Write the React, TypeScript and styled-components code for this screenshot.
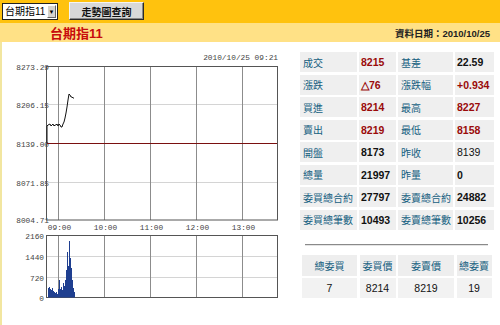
import React from "react";
import styled, { createGlobalStyle } from "styled-components";

const GlobalStyle = createGlobalStyle`
  body {
    margin: 0;
    background: #ffffff;
    font-family: "Liberation Sans", "Noto Sans CJK TC", sans-serif;
  }
`;

const quotes = [
  ["成交", "8215", "red", "基差", "22.59", "black"],
  ["漲跌", "△76", "red", "漲跌幅", "+0.934", "red"],
  ["買進", "8214", "red", "最高", "8227", "red"],
  ["賣出", "8219", "red", "最低", "8158", "red"],
  ["開盤", "8173", "black", "昨收", "8139", "plain"],
  ["總量", "21997", "black", "昨量", "0", "black"],
  ["委買總合約", "27797", "black", "委賣總合約", "24882", "black"],
  ["委買總筆數", "10493", "black", "委賣總筆數", "10256", "black"],
];

const orderHead = ["總委買", "委買價", "委賣價", "總委賣"];
const orderData = ["7", "8214", "8219", "19"];

const pricePoints = [
  [47, 143], [47, 126], [48, 125], [50, 124], [51, 126], [52, 125], [53, 124],
  [54, 126], [55, 125], [56, 125], [57, 124], [58, 126], [59, 124], [60, 125],
  [61, 127], [62, 127], [63, 124], [64, 122], [65, 118], [66, 113], [67, 107],
  [68, 100], [69, 94], [70, 95], [71, 97], [72, 97], [73, 98], [74, 98],
];

const volumeTops = [
  288, 287, 289, 290, 288, 291, 292, 293, 292, 294, 289, 280, 289, 287,
  290, 283, 286, 280, 270, 252, 266, 241, 258, 268, 280, 288, 292,
];

const vLines = [58.5, 104.5, 150.5, 196.5, 242.5];
const times = ["09:00", "10:00", "11:00", "12:00", "13:00"];
const priceLabels = [
  ["8273.29", 70],
  ["8206.15", 108],
  ["8139.00", 146.5],
  ["8071.85", 185.5],
  ["8004.71", 223],
];
const volLabels = [
  ["2160", 239],
  ["1440", 260],
  ["720", 281],
  ["0", 301],
];

const TrendChart = () => (
  <svg width="296" height="283" viewBox="2 42 296 283">
    <g fontFamily="Liberation Mono, monospace" fontSize="7.8" fill="#444">
      <text x="278" y="60" textAnchor="end">2010/10/25 09:21</text>
      {priceLabels.map(([t, y]) => (
        <text key={t} x="49" y={y} textAnchor="end">{t}</text>
      ))}
      {volLabels.map(([t, y]) => (
        <text key={t} x="44" y={y} textAnchor="end">{t}</text>
      ))}
      {times.map((t, i) => (
        <text key={t} x={vLines[i] + 1} y="230" textAnchor="middle">{t}</text>
      ))}
    </g>

    <line x1="47" x2="277" y1="104.5" y2="104.5" stroke="#d4d4d4" />
    <line x1="47" x2="277" y1="182.5" y2="182.5" stroke="#d4d4d4" />
    <line x1="47" x2="277" y1="256.5" y2="256.5" stroke="#d4d4d4" />
    <line x1="47" x2="277" y1="277.5" y2="277.5" stroke="#d4d4d4" />
    {vLines.map((x) => (
      <g key={x}>
        <line x1={x} x2={x} y1="66" y2="220" stroke="#8c8c8c" />
        <line x1={x} x2={x} y1="236" y2="297" stroke="#8c8c8c" />
      </g>
    ))}
    <line x1="47" x2="277" y1="143.5" y2="143.5" stroke="#7a1010" />

    <rect x="46.5" y="66.5" width="231" height="153.5" fill="none" stroke="#555" />
    <rect x="46.5" y="235.5" width="231" height="62" fill="none" stroke="#555" />

    {volumeTops.map((top, i) => (
      <rect key={i} x={48 + i} y={top} width="1" height={297.5 - top} fill="#1f3f90" />
    ))}

    <polyline
      points={pricePoints.map(([x, y]) => `${x},${y}`).join(" ")}
      fill="none"
      stroke="#111"
      strokeWidth="1"
    />
  </svg>
);

const App = () => {
  return (
    <Page>
      <GlobalStyle />
      <TopBar>
        <SelectBox>
          <SelectText>台期指11</SelectText>
          <SelectArrow>▼</SelectArrow>
        </SelectBox>
        <QueryButton>走勢圖查詢</QueryButton>
      </TopBar>
      <SubBar>
        <Title>台期指11</Title>
        <DateInfo>資料日期：2010/10/25</DateInfo>
      </SubBar>
      <Body>
        <ChartPanel>
          <TrendChart />
        </ChartPanel>
        <InfoPanel>
          <QuoteGrid>
            {quotes.map(([l1, v1, t1, l2, v2, t2]) => (
              <React.Fragment key={l1}>
                <LabelCell>{l1}</LabelCell>
                <ValueCell $tone={t1}>{v1}</ValueCell>
                <LabelCell>{l2}</LabelCell>
                <ValueCell $tone={t2}>{v2}</ValueCell>
              </React.Fragment>
            ))}
          </QuoteGrid>
          <Divider />
          <OrderGrid>
            {orderHead.map((h) => (
              <HeadCell key={h}>{h}</HeadCell>
            ))}
            {orderData.map((d, i) => (
              <DataCell key={i}>{d}</DataCell>
            ))}
          </OrderGrid>
        </InfoPanel>
      </Body>
    </Page>
  );
};

const Page = styled.div`
  width: 500px;
  height: 325px;
  display: flex;
  flex-direction: column;
  overflow: hidden;
`;

const TopBar = styled.div`
  height: 23px;
  background: #ffc20e;
  display: flex;
  align-items: center;
  padding: 0 2px;
  gap: 11px;
`;

const SelectBox = styled.div`
  width: 54px;
  height: 15px;
  border: 1px solid #222;
  background: #fff;
  display: flex;
  align-items: center;
  justify-content: space-between;
`;

const SelectText = styled.span`
  font-family: "Liberation Sans", "Noto Sans CJK TC", sans-serif;
  font-size: 10px;
  line-height: 15px;
  padding-left: 2px;
  white-space: nowrap;
  color: #000;
`;

const SelectArrow = styled.span`
  width: 9px;
  height: 13px;
  margin-right: 1px;
  background: #d6d3ce;
  border: 1px solid #fff;
  border-right-color: #666;
  border-bottom-color: #666;
  box-sizing: border-box;
  font-size: 6px;
  line-height: 12px;
  text-align: center;
  color: #000;
`;

const QueryButton = styled.button`
  width: 75px;
  height: 18px;
  margin-top: -1px;
  padding: 0;
  background: #d8d8d8;
  border: 1px solid;
  border-color: #f4f4f4 #2a2a2a #2a2a2a #f4f4f4;
  box-shadow: inset -1px -1px 0 #888;
  font-family: "Noto Sans CJK TC", sans-serif;
  font-size: 10px;
  font-weight: bold;
  color: #111;
`;

const SubBar = styled.div`
  height: 19px;
  background: #ffe186;
  display: flex;
  align-items: center;
  justify-content: space-between;
  padding: 0 10px 0 50px;
`;

const Title = styled.span`
  font-family: "Liberation Sans", "Noto Sans CJK TC", sans-serif;
  font-size: 13px;
  font-weight: bold;
  color: #c80c0c;
`;

const DateInfo = styled.span`
  font-family: "Liberation Sans", "Noto Sans CJK TC", sans-serif;
  font-size: 9.5px;
  font-weight: bold;
  color: #222;
`;

const Body = styled.div`
  flex: 1;
  display: flex;
  border-left: 2px solid #f2e6a0;
`;

const ChartPanel = styled.div`
  width: 296px;
  display: flex;
`;

const InfoPanel = styled.div`
  padding: 10px 0 0 2px;
  display: flex;
  flex-direction: column;
`;

const QuoteGrid = styled.div`
  display: grid;
  grid-template-columns: 57px 37px 55px 39px;
  grid-auto-rows: 20px;
  column-gap: 2px;
  row-gap: 2.5px;
`;

const Cell = styled.div`
  background: #efefef;
  display: flex;
  align-items: center;
  padding-left: 3px;
  white-space: nowrap;
`;

const LabelCell = styled(Cell)`
  font-family: "Noto Sans CJK TC", sans-serif;
  font-size: 10px;
  color: #15607f;
`;

const ValueCell = styled(Cell)<{ $tone: string }>`
  padding-left: 2px;
  font-family: "Liberation Sans", sans-serif;
  font-size: 10.5px;
  font-weight: ${(p) => (p.$tone === "plain" ? "normal" : "bold")};
  color: ${(p) => (p.$tone === "red" ? "#9a0a0a" : "#111")};
`;

const Divider = styled.div`
  height: 1px;
  background: #8a8a8a;
  margin: 14px 6px 0 5px;
  box-shadow: 0 1px 0 #e4e4e4;
`;

const OrderGrid = styled.div`
  display: grid;
  grid-template-columns: 55px 36px 56px 35px;
  grid-template-rows: 21px 20px;
  column-gap: 2.5px;
  row-gap: 2px;
  margin: 10px 0 0 2px;
`;

const HeadCell = styled.div`
  background: #eeeeee;
  display: flex;
  align-items: center;
  justify-content: center;
  font-family: "Noto Sans CJK TC", sans-serif;
  font-size: 10px;
  color: #15607f;
`;

const DataCell = styled.div`
  background: #f2f2f2;
  display: flex;
  align-items: center;
  justify-content: center;
  font-family: "Liberation Sans", sans-serif;
  font-size: 10.5px;
  color: #111;
`;

export default App;
